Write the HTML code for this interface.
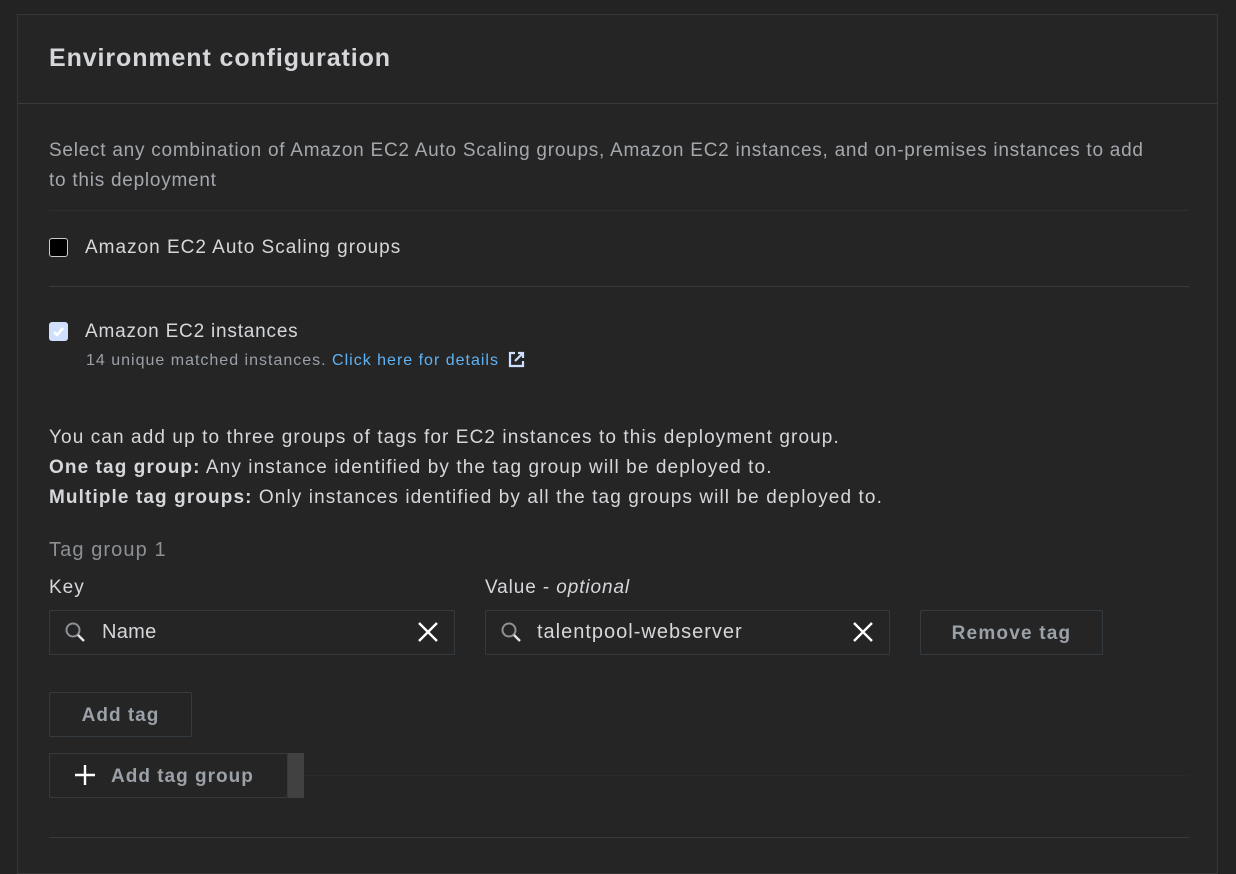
<!DOCTYPE html>
<html><head><style>
body{margin:0;width:1236px;height:856px;background:#232323;font-family:"Liberation Sans",sans-serif;overflow:hidden;position:relative;color:#d5d7da;letter-spacing:1px}
.p{position:absolute;left:17px;top:14px;width:1201px;height:860px;background:#252525;border:1px solid #363636;box-sizing:border-box}
.a{position:absolute;white-space:nowrap}
.hl{position:absolute;height:1px;background:#3a3a3a}
.box{position:absolute;border:1px solid #333b40;border-radius:2px;box-sizing:border-box}
.btn{position:absolute;border:1px solid #333b40;border-radius:2px;box-sizing:border-box;color:#9ba1a8;font-weight:bold;font-size:19px;text-align:center}
</style></head><body>
<div class="p"></div>
<div class="a" style="left:49px;top:44px;font-size:25px;font-weight:bold;color:#d5d7da;letter-spacing:0.9px">Environment configuration</div>
<div class="hl" style="left:18px;top:103px;width:1200px;background:#3a3a3a"></div>
<div class="a" style="left:49px;top:136px;font-size:19px;line-height:30px;color:#a4a8ad;letter-spacing:0.75px">Select any combination of Amazon EC2 Auto Scaling groups, Amazon EC2 instances, and on-premises instances to add<br>to this deployment</div>
<div class="hl" style="left:49px;top:210px;width:1140px;background:#2e2e2e"></div>
<div class="a" style="left:49px;top:238px;width:19px;height:19px;background:#000;border:1.5px solid #ccc;border-radius:3px;box-sizing:border-box"></div>
<div class="a" style="left:85px;top:237px;font-size:19px">Amazon EC2 Auto Scaling groups</div>
<div class="hl" style="left:49px;top:286px;width:1140px"></div>
<div class="a" style="left:49px;top:322px;width:19px;height:19px;background:#cfe0ff;border-radius:3px"></div>
<svg class="a" style="left:49px;top:322px" width="19" height="19"><path d="M5 10l3 3 6-7" stroke="#fff" stroke-width="2.4" fill="none"/></svg>
<div class="a" style="left:85px;top:321px;font-size:19px;letter-spacing:0.8px">Amazon EC2 instances</div>
<div class="a" style="left:86px;top:352px;font-size:16px;color:#9ba1a8">14 unique matched instances. <span style="color:#5fb3f5">Click here for details</span></div>
<svg class="a" style="left:507px;top:350px" width="19" height="19"><path d="M8 3H3v13h13v-5" stroke="#cfe0ff" stroke-width="2.2" fill="none"/><path d="M11 3h5v5M16 3l-8 8" stroke="#cfe0ff" stroke-width="2.2" fill="none"/></svg>
<div class="a" style="left:49px;top:423px;font-size:19px;line-height:30px;letter-spacing:1.1px">You can add up to three groups of tags for EC2 instances to this deployment group.<br><b>One tag group:</b> Any instance identified by the tag group will be deployed to.<br><b>Multiple tag groups:</b> Only instances identified by all the tag groups will be deployed to.</div>
<div class="a" style="left:49px;top:539px;font-size:20px;color:#8d9196;letter-spacing:1.1px">Tag group 1</div>
<div class="a" style="left:49px;top:577px;font-size:19px">Key</div>
<div class="a" style="left:485px;top:577px;font-size:19px;letter-spacing:0.9px">Value - <i>optional</i></div>
<div class="box" style="left:49px;top:610px;width:406px;height:45px"></div>
<div class="box" style="left:485px;top:610px;width:405px;height:45px"></div>
<svg class="a" style="left:64px;top:621px" width="24" height="24"><circle cx="9" cy="9" r="6.5" stroke="#8d9196" stroke-width="2" fill="none"/><path d="M14 14l6 6" stroke="#e6e6e6" stroke-width="2.4"/></svg>
<svg class="a" style="left:500px;top:621px" width="24" height="24"><circle cx="9" cy="9" r="6.5" stroke="#8d9196" stroke-width="2" fill="none"/><path d="M14 14l6 6" stroke="#e6e6e6" stroke-width="2.4"/></svg>
<div class="a" style="left:102px;top:621px;font-size:20px;letter-spacing:0.3px">Name</div>
<div class="a" style="left:537px;top:621px;font-size:20px">talentpool-webserver</div>
<svg class="a" style="left:417px;top:621px" width="22" height="22"><path d="M2 2l18 18M20 2L2 20" stroke="#fff" stroke-width="2.4"/></svg>
<svg class="a" style="left:852px;top:621px" width="22" height="22"><path d="M2 2l18 18M20 2L2 20" stroke="#fff" stroke-width="2.4"/></svg>
<div class="btn" style="left:920px;top:610px;width:183px;height:45px;line-height:45px;letter-spacing:1.2px">Remove tag</div>
<div class="btn" style="left:49px;top:692px;width:143px;height:45px;line-height:45px">Add tag</div>
<div class="hl" style="left:304px;top:775px;width:885px;background:#2a2a2a"></div>
<div class="btn" style="left:49px;top:753px;width:239px;height:45px;line-height:45px;text-align:left;padding-left:61px">Add tag group</div>
<svg class="a" style="left:73px;top:763px" width="24" height="24"><path d="M12 2v20M2 12h20" stroke="#fff" stroke-width="2.4"/></svg>
<div class="a" style="left:288px;top:753px;width:16px;height:45px;background:#414141"></div>
<div class="hl" style="left:49px;top:837px;width:1140px"></div>
</body></html>
